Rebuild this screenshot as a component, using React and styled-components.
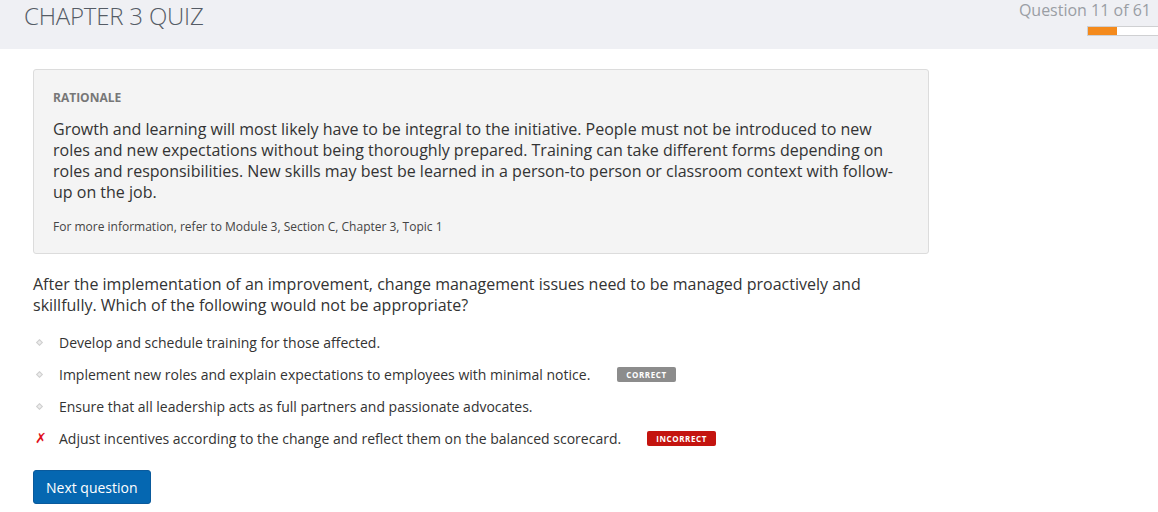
import React from 'react'
import styled, { createGlobalStyle } from 'styled-components'

const GlobalStyle = createGlobalStyle`
  html, body {
    margin: 0;
    padding: 0;
    background: #fff;
    font-family: "Open Sans", "Liberation Sans", sans-serif;
    color: #333;
  }
`

const Header = styled.header`
  height: 49px;
  background: #eff0f4;
  display: flex;
  justify-content: space-between;
  align-items: flex-start;
  padding: 0 0 0 24px;
`

const Title = styled.h1`
  margin: 0;
  padding-top: 0;
  font-size: 24px;
  font-weight: 300;
  color: #555c66;
  line-height: 32px;
  letter-spacing: -0.2px;
`

const Progress = styled.div`
  display: flex;
  flex-direction: column;
  align-items: flex-end;
`

const Counter = styled.div`
  font-size: 16px;
  color: #9a9ea4;
  line-height: 20px;
  padding-right: 7px;
`

const Track = styled.div`
  margin-top: 6px;
  width: 70px;
  height: 8px;
  background: #fff;
  border: 1px solid #cfd0d2;
  border-right: none;
`

const Fill = styled.div`
  height: 100%;
  background: #f48a1c;
`

const Main = styled.main`
  padding: 20px 33px;
  width: 896px;
`

const Rationale = styled.section`
  background: #f4f4f4;
  border: 1px solid #dcdcdc;
  border-radius: 3px;
  padding: 20px 19px 18px;
`

const Label = styled.div`
  font-size: 12px;
  font-weight: 700;
  color: #777;
  line-height: 16px;
`

const Para = styled.p`
  margin: 13px 0 16px;
  font-size: 16px;
  line-height: 21px;
  color: #333;
  padding-right: 10px;
`

const Ref = styled.div`
  font-size: 12px;
  line-height: 16px;
  color: #444;
`

const Question = styled.p`
  margin: 20px 0 17px;
  font-size: 16px;
  line-height: 21px;
  color: #333;
  padding-right: 60px;
`

const Options = styled.ul`
  list-style: none;
  margin: 0;
  padding: 0;
  display: flex;
  flex-direction: column;
  gap: 13px;
`

const Option = styled.li`
  display: flex;
  align-items: center;
  font-size: 14px;
  line-height: 19px;
  color: #333;
`

const Marker = styled.span`
  width: 26px;
  display: flex;
  align-items: center;
  padding-left: 2px;
  box-sizing: border-box;
`

const Diamond = styled.span`
  display: block;
  width: 3px;
  height: 3px;
  margin-left: 2px;
  border: 1px solid #cfcfcf;
  background: #ececec;
  transform: rotate(45deg);
`

const Cross = styled.span`
  color: #e0101b;
  font-size: 14px;
  font-weight: 700;
  font-style: italic;
  font-family: "DejaVu Sans", sans-serif;
`

const Badge = styled.span`
  margin-left: ${p => p.$gap}px;
  background: ${p => p.$bg};
  color: #fff;
  font-size: 8px;
  font-weight: 700;
  letter-spacing: 0.6px;
  padding: 1px 9px 1px;
  border-radius: 2px;
  line-height: 13px;
`

const Button = styled.button`
  margin-top: 22px;
  background: #0567b1;
  color: #fff;
  border: 1px solid #0a5a9c;
  border-radius: 3px;
  font-family: inherit;
  font-size: 14px;
  padding: 0 12px;
  height: 34px;
  cursor: pointer;
`

const options = [
  { text: 'Develop and schedule training for those affected.' },
  {
    text: 'Implement new roles and explain expectations to employees with minimal notice.',
    badge: 'CORRECT',
    bg: '#8c8c8c',
    gap: 27,
  },
  { text: 'Ensure that all leadership acts as full partners and passionate advocates.' },
  {
    text: 'Adjust incentives according to the change and reflect them on the balanced scorecard.',
    badge: 'INCORRECT',
    bg: '#c4140f',
    gap: 26,
    wrong: true,
  },
]

export default function App() {
  return (
    <>
      <GlobalStyle />
      <Header>
        <Title>CHAPTER 3 QUIZ</Title>
        <Progress>
          <Counter>Question 11 of 61</Counter>
          <Track>
            <Fill style={{ width: `${(11 / 61) * 100 * 2.3}%` }} />
          </Track>
        </Progress>
      </Header>
      <Main>
        <Rationale>
          <Label>RATIONALE</Label>
          <Para>
            Growth and learning will most likely have to be integral to the initiative. People must
            not be introduced to new roles and new expectations without being thoroughly prepared.
            Training can take different forms depending on roles and responsibilities. New skills
            may best be learned in a person-to person or classroom context with follow-up on the job.
          </Para>
          <Ref>For more information, refer to Module 3, Section C, Chapter 3, Topic 1</Ref>
        </Rationale>
        <Question>
          After the implementation of an improvement, change management issues need to be managed
          proactively and skillfully. Which of the following would not be appropriate?
        </Question>
        <Options>
          {options.map(o => (
            <Option key={o.text}>
              <Marker>{o.wrong ? <Cross>✗</Cross> : <Diamond />}</Marker>
              {o.text}
              {o.badge && (
                <Badge $bg={o.bg} $gap={o.gap}>
                  {o.badge}
                </Badge>
              )}
            </Option>
          ))}
        </Options>
        <Button>Next question</Button>
      </Main>
    </>
  )
}
